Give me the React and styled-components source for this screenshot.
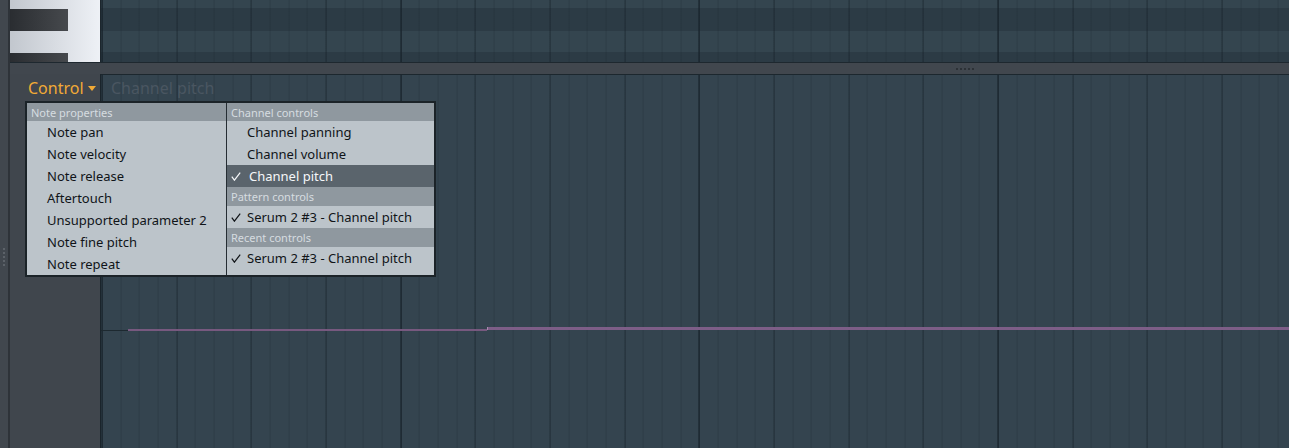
import React from 'react'
import styled, { createGlobalStyle } from 'styled-components'

const GlobalStyle = createGlobalStyle`
  html, body {
    margin: 0;
    padding: 0;
    background: #34444f;
  }
  body {
    font-family: 'Noto Sans', 'Open Sans', sans-serif;
  }
  #root {
    width: 1289px;
    height: 448px;
    overflow: hidden;
  }
`

const vLines = `
  repeating-linear-gradient(to right, #18232b 0 1px, transparent 1px 298.667px),
  repeating-linear-gradient(to right, rgba(18, 28, 36, 0.42) 0 1px, transparent 1px 74.667px),
  repeating-linear-gradient(to right, rgba(18, 28, 36, 0.2) 0 1px, transparent 1px 18.667px)
`

const Screen = styled.div`
  display: flex;
  width: 1289px;
  height: 448px;
  overflow: hidden;
  background: #34444f;
`

const SideStrip = styled.div`
  flex: none;
  width: 8px;
  background: #41474e;
  border-right: 2px solid #2e3339;
  display: flex;
  flex-direction: column;
  align-items: center;
  gap: 2px;
  padding-top: 248px;
  box-sizing: content-box;
`

const Dot = styled.span`
  display: block;
  width: 2px;
  height: 2px;
  background: ${(p) => p.$color};
`

const Main = styled.div`
  flex: 1;
  display: flex;
  flex-direction: column;
  min-width: 0;
`

const TopPane = styled.div`
  flex: none;
  height: 62px;
  display: flex;
`

const Keyboard = styled.div`
  flex: none;
  width: 90px;
  border-right: 1px solid #1c262d;
  background: linear-gradient(to right, #c2c7ce, #eef1f6);
  display: flex;
  flex-direction: column;
`

const KeyGap = styled.div`
  flex: none;
  height: ${(p) => p.$h}px;
`

const BlackKey = styled.div`
  flex: none;
  width: 58px;
  height: ${(p) => p.$h}px;
  background: linear-gradient(to right, #2a2d31, #46494d);
`

const NoteGrid = styled.div`
  flex: 1;
  background-color: #35454f;
  background-image: ${vLines},
    linear-gradient(
      to bottom,
      #34454f 0 8px,
      #2c3b45 8px 31px,
      #34454f 31px 52px,
      #2c3b45 52px
    );
  background-position: 0.6px 0, 0.6px 0, 0.6px 0, 0 0;
`

const Splitter = styled.div`
  flex: none;
  height: 11px;
  border-top: 1px solid #1e282f;
  background: #41474e;
  display: flex;
  align-items: center;
  gap: 2px;
  padding-left: 946px;
`

const BottomPane = styled.div`
  flex: 1;
  display: flex;
  position: relative;
`

const ControlPanel = styled.div`
  flex: none;
  width: 90px;
  background: #40464d;
  padding: 4px 0 0 18px;
  box-sizing: border-box;
`

const ControlButton = styled.div`
  display: flex;
  align-items: center;
  gap: 4px;
  font-size: 16px;
  line-height: 20px;
  color: #f2aa36;
  white-space: nowrap;
`

const EventGrid = styled.div`
  flex: 1;
  position: relative;
  border-top: 1px solid #1c272e;
  border-left: 1px solid #1a242b;
  background-color: #34444f;
  background-image: ${vLines};
  background-position: 0.6px 0;
  padding: 3px 0 0 10px;
`

const GhostLabel = styled.div`
  font-size: 16px;
  line-height: 20px;
  color: #4a5661;
  white-space: nowrap;
`

const Curve = styled.svg`
  position: absolute;
  inset: 0;
  width: 100%;
  height: 100%;
`

const Menu = styled.div`
  position: absolute;
  left: 15px;
  top: 27px;
  width: 407px;
  height: 172px;
  border: 2px solid #1b2328;
  background: #bcc4ca;
  display: flex;
`

const Column = styled.div`
  display: flex;
  flex-direction: column;
  width: ${(p) => p.$w}px;
  flex: none;
  border-right: ${(p) => (p.$divider ? '1px solid #252d33' : 'none')};
`

const Header = styled.div`
  height: ${(p) => p.$h || 18}px;
  display: flex;
  align-items: center;
  padding-left: 4px;
  background: #8f989f;
  color: #d6dce0;
  font-size: 11px;
  white-space: nowrap;
`

const Item = styled.div`
  height: 22px;
  display: flex;
  align-items: center;
  padding-left: 4px;
  font-size: 13px;
  white-space: nowrap;
  color: ${(p) => (p.$active ? '#f5f7f9' : '#101418')};
  background: ${(p) => (p.$active ? '#5a646c' : 'transparent')};
`

const CheckSlot = styled.span`
  flex: none;
  width: 16px;
  display: flex;
  align-items: center;
`

const Label = styled.span`
  margin-left: ${(p) => (p.$active ? 2 : 0)}px;
`

const Check = () => (
  <svg width="10" height="9" viewBox="0 0 10 9">
    <path d="M0.8 4.6 L3.4 8.2 L9.2 0.6" fill="none" stroke="currentColor" strokeWidth="1.2" />
  </svg>
)

const Caret = () => (
  <svg width="8" height="5" viewBox="0 0 8 5">
    <path d="M0 0 H8 L4 5 Z" fill="currentColor" />
  </svg>
)

const MenuItem = ({ checked, active, children }) => (
  <Item $active={active}>
    <CheckSlot>{checked && <Check />}</CheckSlot>
    <Label $active={active}>{children}</Label>
  </Item>
)

const noteProps = [
  'Note pan',
  'Note velocity',
  'Note release',
  'Aftertouch',
  'Unsupported parameter 2',
  'Note fine pitch',
  'Note repeat',
]

const dots = [0, 1, 2, 3, 4]

export default function App() {
  return (
    <Screen>
      <GlobalStyle />
      <SideStrip>
        {dots.map((d) => (
          <Dot key={d} $color="#5c6269" />
        ))}
      </SideStrip>
      <Main>
        <TopPane>
          <Keyboard>
            <KeyGap $h={9} />
            <BlackKey $h={22} />
            <KeyGap $h={22} />
            <BlackKey $h={9} />
          </Keyboard>
          <NoteGrid />
        </TopPane>
        <Splitter>
          {dots.map((d) => (
            <Dot key={d} $color="#2c3136" />
          ))}
        </Splitter>
        <BottomPane>
          <ControlPanel>
            <ControlButton>
              Control <Caret />
            </ControlButton>
          </ControlPanel>
          <EventGrid>
            <GhostLabel>Channel pitch</GhostLabel>
            <Curve>
              <rect x="0" y="255" width="27" height="1" fill="#1d2930" />
              <rect x="27" y="254" width="359" height="2" fill="#77597f" />
              <rect x="386" y="252" width="1200" height="3" fill="#7d5e87" />
              <rect x="386" y="252" width="1" height="3" fill="#a68aae" />
            </Curve>
          </EventGrid>
          <Menu>
            <Column $w={199} $divider>
              <Header>Note properties</Header>
              {noteProps.map((n) => (
                <MenuItem key={n}>{n}</MenuItem>
              ))}
            </Column>
            <Column $w={207}>
              <Header>Channel controls</Header>
              <MenuItem>Channel panning</MenuItem>
              <MenuItem>Channel volume</MenuItem>
              <MenuItem checked active>Channel pitch</MenuItem>
              <Header $h={19}>Pattern controls</Header>
              <MenuItem checked>Serum 2 #3 - Channel pitch</MenuItem>
              <Header $h={19}>Recent controls</Header>
              <MenuItem checked>Serum 2 #3 - Channel pitch</MenuItem>
            </Column>
          </Menu>
        </BottomPane>
      </Main>
    </Screen>
  )
}
